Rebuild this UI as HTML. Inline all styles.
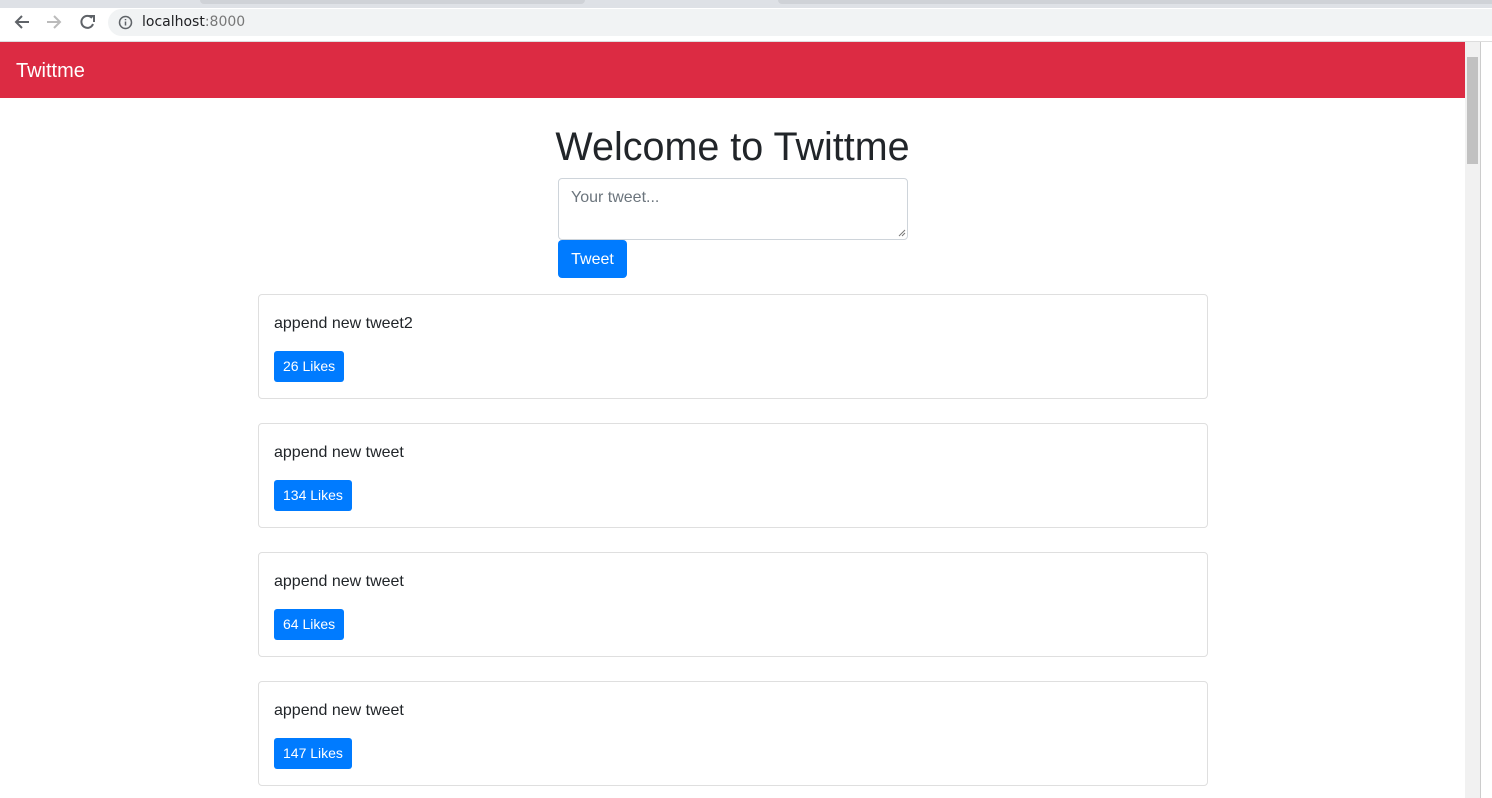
<!DOCTYPE html>
<html><head><meta charset="utf-8"><style>
*{box-sizing:border-box;margin:0;padding:0}
body{width:1492px;height:798px;overflow:hidden;background:#fff;font-family:"Liberation Sans",sans-serif;position:relative;color:#212529}
.a{position:absolute}
.card{position:absolute;left:258px;width:950px;height:105px;border:1px solid #dfdfdf;border-radius:4px}
.card p{position:absolute;left:15px;top:20px;font-size:16px}
.card span{position:absolute;left:15px;top:56px;height:31px;background:#007bff;color:#fff;font-size:14px;line-height:31px;padding:0 9px;border-radius:3px}
</style></head><body>
<div class="a" style="left:0;top:0;width:1492px;height:8px;background:#dee1e6"></div>
<div class="a" style="left:200px;top:0;width:385px;height:4px;background:#cfd2d7;border-radius:0 0 6px 6px"></div>
<div class="a" style="left:778px;top:0;width:714px;height:4px;background:#cfd2d7;border-radius:0 0 0 6px"></div>
<div class="a" style="left:0;top:8px;width:1492px;height:34px;background:#fff;border-bottom:1px solid #ddd"></div>
<svg class="a" style="left:12px;top:12px" width="90" height="20" viewBox="0 0 90 20" fill="none" stroke-width="2">
<path d="M17 10H4M10 4L4 10L10 16" stroke="#5f6368"/>
<path d="M35 10H48M42 4L48 10L42 16" stroke="#bbb"/>
<path d="M80 6A6 6 0 1 0 81 12" stroke="#5f6368"/><path d="M76 4h6v6" stroke="#5f6368" fill="none"/>
</svg>
<div class="a" style="left:108px;top:9px;width:1384px;height:27px;background:#f1f3f4;border-radius:14px 0 0 14px"></div>
<svg class="a" style="left:118px;top:15px" width="15" height="15" viewBox="0 0 15 15"><circle cx="7.5" cy="7.5" r="6" fill="none" stroke="#5f6368" stroke-width="1.5"/><path d="M7.5 6.5v4M7.5 4v1.2" stroke="#5f6368" stroke-width="1.5"/></svg>
<div class="a" style="left:142px;top:14px;font-size:14px;font-family:'DejaVu Sans',sans-serif;color:#202124">localhost<span style="color:#777">:8000</span></div>
<div class="a" style="left:0;top:42px;width:1465px;height:56px;background:#dc2b43"></div>
<div class="a" style="left:16px;top:60px;font-size:20px;color:#fff">Twittme</div>
<div class="a" style="left:1465px;top:42px;width:15px;height:756px;background:#f1f1f1"></div>
<div class="a" style="left:1467px;top:57px;width:11px;height:107px;background:#c1c1c1"></div>
<div class="a" style="left:1480px;top:42px;width:12px;height:756px;background:#fff;border-left:1px solid #ccc"></div>
<div class="a" style="left:0;top:125px;width:1465px;text-align:center;font-size:39.5px;color:#212529">Welcome to Twittme</div>
<div class="a" style="left:558px;top:178px;width:350px;height:62px;border:1px solid #ced4da;border-radius:4px;padding:10px 12px;font-size:16px;color:#6c757d">Your tweet...</div>
<svg class="a" style="left:898px;top:229px" width="8" height="8"><path d="M7 1L1 7M7 4L4 7" stroke="#777"/></svg>
<div class="a" style="left:558px;top:240px;width:69px;height:38px;background:#007bff;color:#fff;border-radius:4px;font-size:16px;line-height:38px;text-align:center;padding-top:1px">Tweet</div>
<div class="card" style="top:294px"><p>append new tweet2</p><span>26 Likes</span></div>
<div class="card" style="top:423px"><p>append new tweet</p><span>134 Likes</span></div>
<div class="card" style="top:552px"><p>append new tweet</p><span>64 Likes</span></div>
<div class="card" style="top:681px"><p>append new tweet</p><span>147 Likes</span></div>
</body></html>
